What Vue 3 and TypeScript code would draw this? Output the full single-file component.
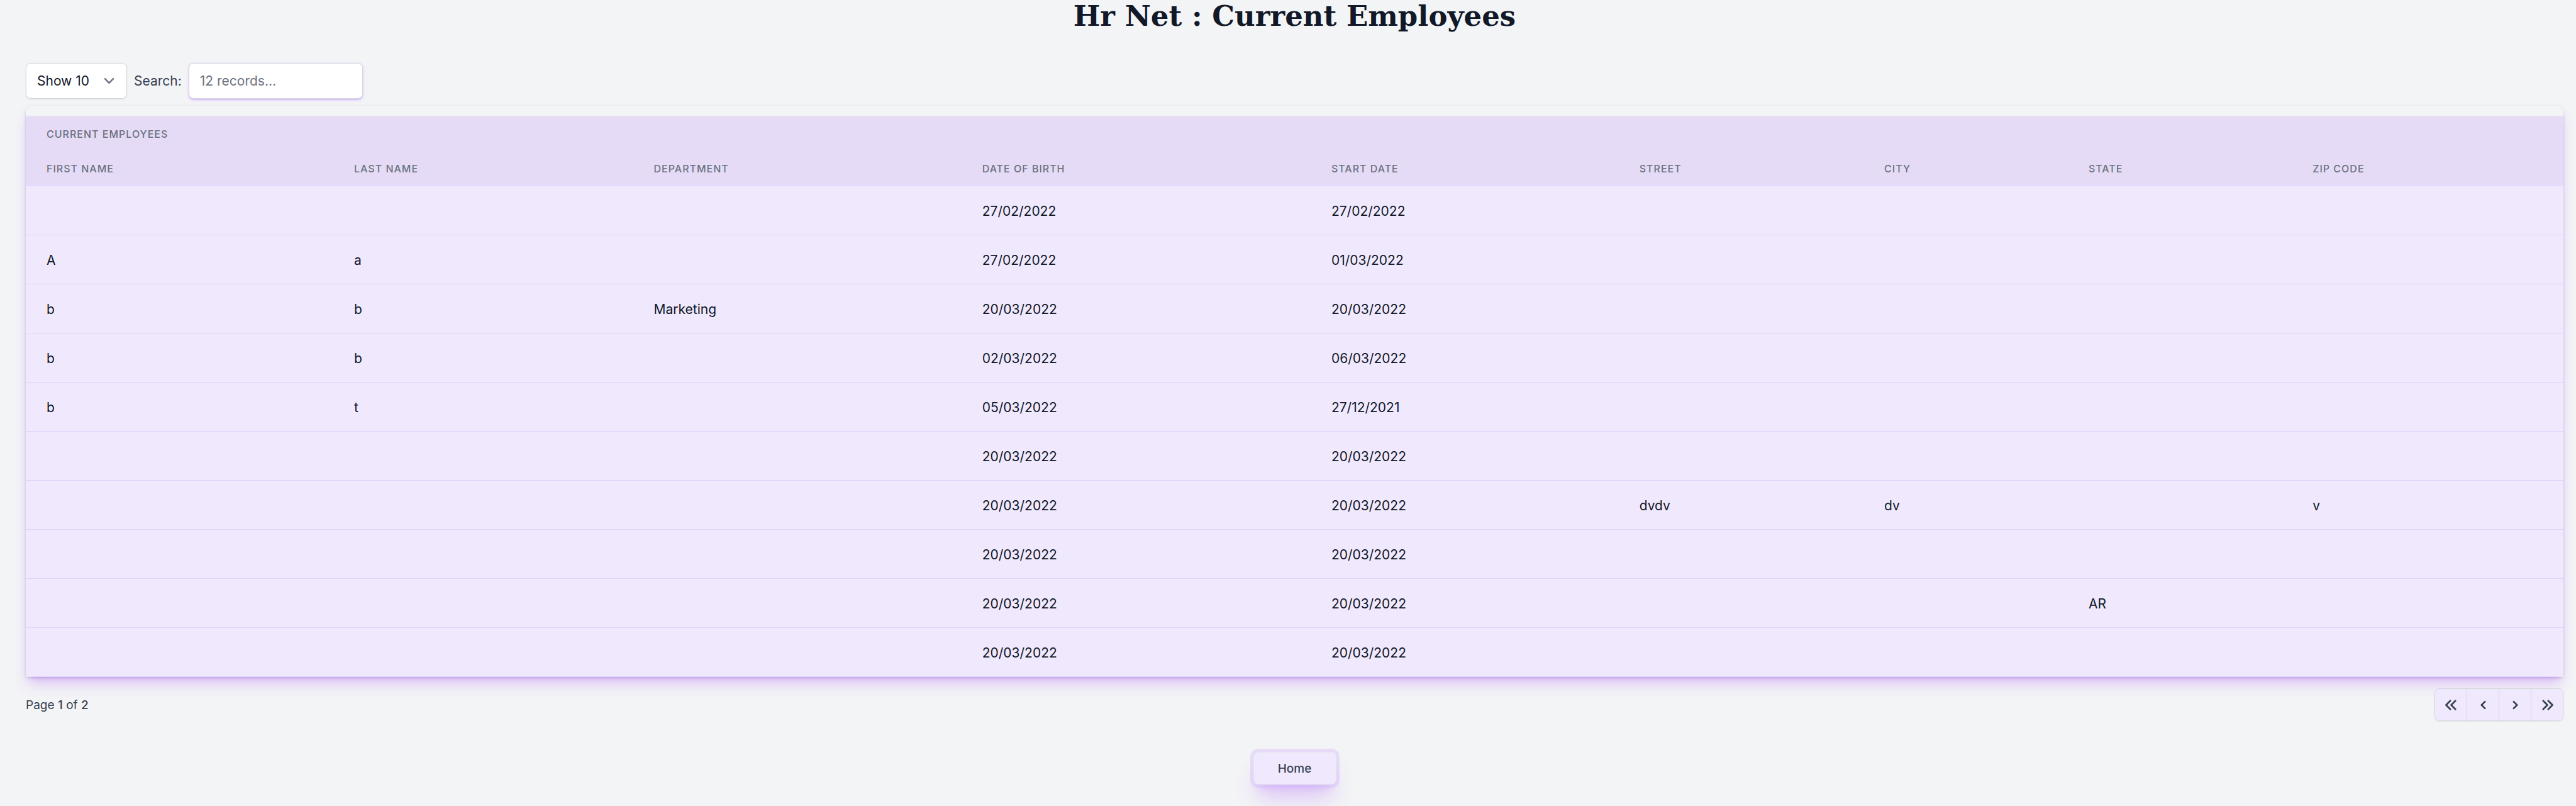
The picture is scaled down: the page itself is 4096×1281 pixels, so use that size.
<script setup lang="ts">
import { ref } from 'vue'

interface Column {
  key: string
  label: string
  width: number
}

type Row = Record<string, string>

const columns: Column[] = [
  { key: 'firstName', label: 'First Name', width: 12.12 },
  { key: 'lastName', label: 'Last Name', width: 11.81 },
  { key: 'department', label: 'Department', width: 12.94 },
  { key: 'birth', label: 'Date of Birth', width: 13.76 },
  { key: 'start', label: 'Start Date', width: 12.14 },
  { key: 'street', label: 'Street', width: 9.65 },
  { key: 'city', label: 'City', width: 8.05 },
  { key: 'state', label: 'State', width: 8.83 },
  { key: 'zip', label: 'Zip Code', width: 10.7 },
]

const rows: Row[] = [
  { birth: '27/02/2022', start: '27/02/2022' },
  { firstName: 'A', lastName: 'a', birth: '27/02/2022', start: '01/03/2022' },
  { firstName: 'b', lastName: 'b', department: 'Marketing', birth: '20/03/2022', start: '20/03/2022' },
  { firstName: 'b', lastName: 'b', birth: '02/03/2022', start: '06/03/2022' },
  { firstName: 'b', lastName: 't', birth: '05/03/2022', start: '27/12/2021' },
  { birth: '20/03/2022', start: '20/03/2022' },
  { birth: '20/03/2022', start: '20/03/2022', street: 'dvdv', city: 'dv', zip: 'v' },
  { birth: '20/03/2022', start: '20/03/2022' },
  { birth: '20/03/2022', start: '20/03/2022', state: 'AR' },
  { birth: '20/03/2022', start: '20/03/2022' },
]

const pageSize = ref(10)
const search = ref('')
const recordCount = 12
const pageCount = 2
const page = ref(1)

const pager = [
  {
    label: 'First',
    go: () => (page.value = 1),
    paths: [
      'M15.707 15.707a1 1 0 01-1.414 0l-5-5a1 1 0 010-1.414l5-5a1 1 0 111.414 1.414L11.414 10l4.293 4.293a1 1 0 010 1.414z',
      'M9.707 15.707a1 1 0 01-1.414 0l-5-5a1 1 0 010-1.414l5-5a1 1 0 011.414 1.414L5.414 10l4.293 4.293a1 1 0 010 1.414z',
    ],
  },
  {
    label: 'Previous',
    go: () => (page.value = Math.max(1, page.value - 1)),
    paths: [
      'M12.707 5.293a1 1 0 010 1.414L9.414 10l3.293 3.293a1 1 0 01-1.414 1.414l-4-4a1 1 0 010-1.414l4-4a1 1 0 011.414 0z',
    ],
  },
  {
    label: 'Next',
    go: () => (page.value = Math.min(pageCount, page.value + 1)),
    paths: [
      'M7.293 14.707a1 1 0 010-1.414L10.586 10 7.293 6.707a1 1 0 011.414-1.414l4 4a1 1 0 010 1.414l-4 4a1 1 0 01-1.414 0z',
    ],
  },
  {
    label: 'Last',
    go: () => (page.value = pageCount),
    paths: [
      'M10.293 15.707a1 1 0 010-1.414L14.586 10l-4.293-4.293a1 1 0 111.414-1.414l5 5a1 1 0 010 1.414l-5 5a1 1 0 01-1.414 0z',
      'M4.293 15.707a1 1 0 010-1.414L8.586 10 4.293 5.707a1 1 0 011.414-1.414l5 5a1 1 0 010 1.414l-5 5a1 1 0 01-1.414 0z',
    ],
  },
]
</script>

<template>
  <main class="page">
    <h1 class="title">Hr Net : Current Employees</h1>

    <div class="toolbar">
      <div class="size">
        <select v-model="pageSize" class="size-select" aria-label="Rows per page">
          <option v-for="n in [10, 20, 50]" :key="n" :value="n">Show {{ n }}</option>
        </select>
        <svg class="size-arrow" viewBox="0 0 20 20" fill="none" aria-hidden="true">
          <path d="M6 8l4 4 4-4" stroke="currentColor" stroke-width="1.5" stroke-linecap="round" stroke-linejoin="round" />
        </svg>
      </div>
      <label class="search-label" for="search">Search:</label>
      <input id="search" v-model="search" class="search" type="text" :placeholder="`${recordCount} records...`" />
    </div>

    <div class="card">
      <div class="scroller">
        <div class="sheet">
          <table class="table">
            <colgroup>
              <col v-for="c in columns" :key="c.key" :style="{ width: c.width + '%' }" />
            </colgroup>
            <thead>
              <tr>
                <th :colspan="columns.length" scope="colgroup">Current Employees</th>
              </tr>
              <tr class="heads">
                <th v-for="c in columns" :key="c.key" scope="col">{{ c.label }}</th>
              </tr>
            </thead>
            <tbody>
              <tr v-for="(row, i) in rows" :key="i">
                <td v-for="c in columns" :key="c.key">{{ row[c.key] }}</td>
              </tr>
            </tbody>
          </table>
        </div>
      </div>
    </div>

    <div class="footer">
      <p class="page-info">Page <b>{{ page }}</b> of <b>{{ pageCount }}</b></p>
      <nav class="pager" aria-label="Pagination">
        <button v-for="b in pager" :key="b.label" type="button" class="pager-button" :aria-label="b.label" @click="b.go">
          <svg viewBox="0 0 20 20" fill="currentColor" aria-hidden="true">
            <path v-for="d in b.paths" :key="d" :d="d" />
          </svg>
        </button>
      </nav>
    </div>

    <div class="actions">
      <button type="button" class="home">Home</button>
    </div>
  </main>
</template>

<style>
body {
  background: #f3f4f6;
}
</style>

<style scoped>
.page {
  padding: 0 20px 34px 41px;
  color: #111827;
  font-family: Inter, "Liberation Sans", sans-serif;
  font-size: 21px;
  line-height: 33px;
}

.title {
  margin: 0 0 48px;
  font-family: Georgia, "DejaVu Serif", serif;
  font-size: 45px;
  font-weight: 700;
  line-height: 52px;
  text-align: center;
}

.toolbar {
  display: flex;
  align-items: center;
  gap: 11px;
  height: 57px;
  margin-bottom: 11px;
}

.size {
  display: grid;
  align-items: center;
  width: 161px;
  height: 100%;
}

.size-select,
.size-arrow {
  grid-area: 1 / 1;
}

.size-select,
.search {
  box-sizing: border-box;
  height: 57px;
  margin: 0;
  padding: 0 17px;
  border: 1px solid #d1d5db;
  border-radius: 8px;
  background: #fff;
  color: #111827;
  font: inherit;
}

.size-select {
  width: 100%;
  appearance: none;
  box-shadow: 0 1px 3px rgba(0, 0, 0, 0.07);
}

.size-arrow {
  justify-self: end;
  width: 33px;
  height: 33px;
  margin-right: 12px;
  color: #6b7280;
  pointer-events: none;
}

.search-label {
  color: #374151;
}

.search {
  width: 277px;
  box-shadow: 0 1px 4px rgba(192, 132, 252, 0.35), 0 3px 3px -1px rgba(192, 132, 252, 0.4);
}

.search::placeholder {
  color: #6b7280;
  opacity: 1;
}

.card {
  border-radius: 11px 11px 0 0;
  box-shadow:
    0 14px 21px -4px rgba(168, 85, 247, 0.32),
    0 5px 8px -5px rgba(168, 85, 247, 0.32),
    0 1px 4px rgba(0, 0, 0, 0.1),
    0 1px 3px -1px rgba(0, 0, 0, 0.1);
}

.scroller {
  overflow: hidden;
  padding-top: 17px;
}

.sheet {
  overflow: hidden;
  border-radius: 0 0 11px 11px;
  box-shadow: 0 1px 4px rgba(0, 0, 0, 0.1);
}

.table {
  width: 100%;
  border-collapse: separate;
  border-spacing: 0;
  table-layout: fixed;
  background: #f0e8fd;
}

th {
  height: 55px;
  box-sizing: border-box;
  padding: 0 33px;
  background: #e5dbf6;
  color: #6b7280;
  font-size: 16px;
  font-weight: 500;
  letter-spacing: 1px;
  line-height: 22px;
  text-align: left;
  text-transform: uppercase;
}

.heads th {
  height: 56px;
  box-shadow: inset 0 -3px #e5d9fa;
}

td {
  box-sizing: border-box;
  height: 78px;
  padding: 2px 33px 0;
  border-bottom: 1px solid #e0d2fa;
  white-space: nowrap;
}

.footer {
  display: flex;
  align-items: center;
  justify-content: space-between;
  margin-top: 18px;
}

.page-info {
  margin: 0;
  color: #374151;
  font-size: 19px;
}

.page-info b {
  font-weight: 500;
}

.pager {
  display: flex;
  overflow: hidden;
  border: 1px solid #d1d5db;
  border-radius: 8px;
  box-shadow: 0 1px 3px rgba(0, 0, 0, 0.07);
}

.pager-button {
  display: grid;
  place-items: center;
  width: 51px;
  height: 50px;
  margin: 0;
  padding: 0;
  border: 0;
  border-left: 1px solid #d1d5db;
  background: #f0e8fd;
  color: #374151;
}

.pager-button:first-child {
  width: 50px;
  border-left: 0;
}

.pager-button svg {
  width: 27px;
  height: 27px;
}

.actions {
  display: flex;
  justify-content: center;
  margin-top: 49px;
}

.home {
  width: 132px;
  height: 52px;
  padding: 0;
  border: 1px solid #e5e7eb;
  border-radius: 8px;
  background: #f0e8fd;
  box-shadow:
    0 0 0 5px rgba(216, 190, 250, 0.45),
    0 27px 34px -7px rgba(168, 85, 247, 0.3),
    0 11px 14px -8px rgba(168, 85, 247, 0.3);
  color: #374151;
  font: 500 19px / 27px Inter, "Liberation Sans", sans-serif;
}
</style>
